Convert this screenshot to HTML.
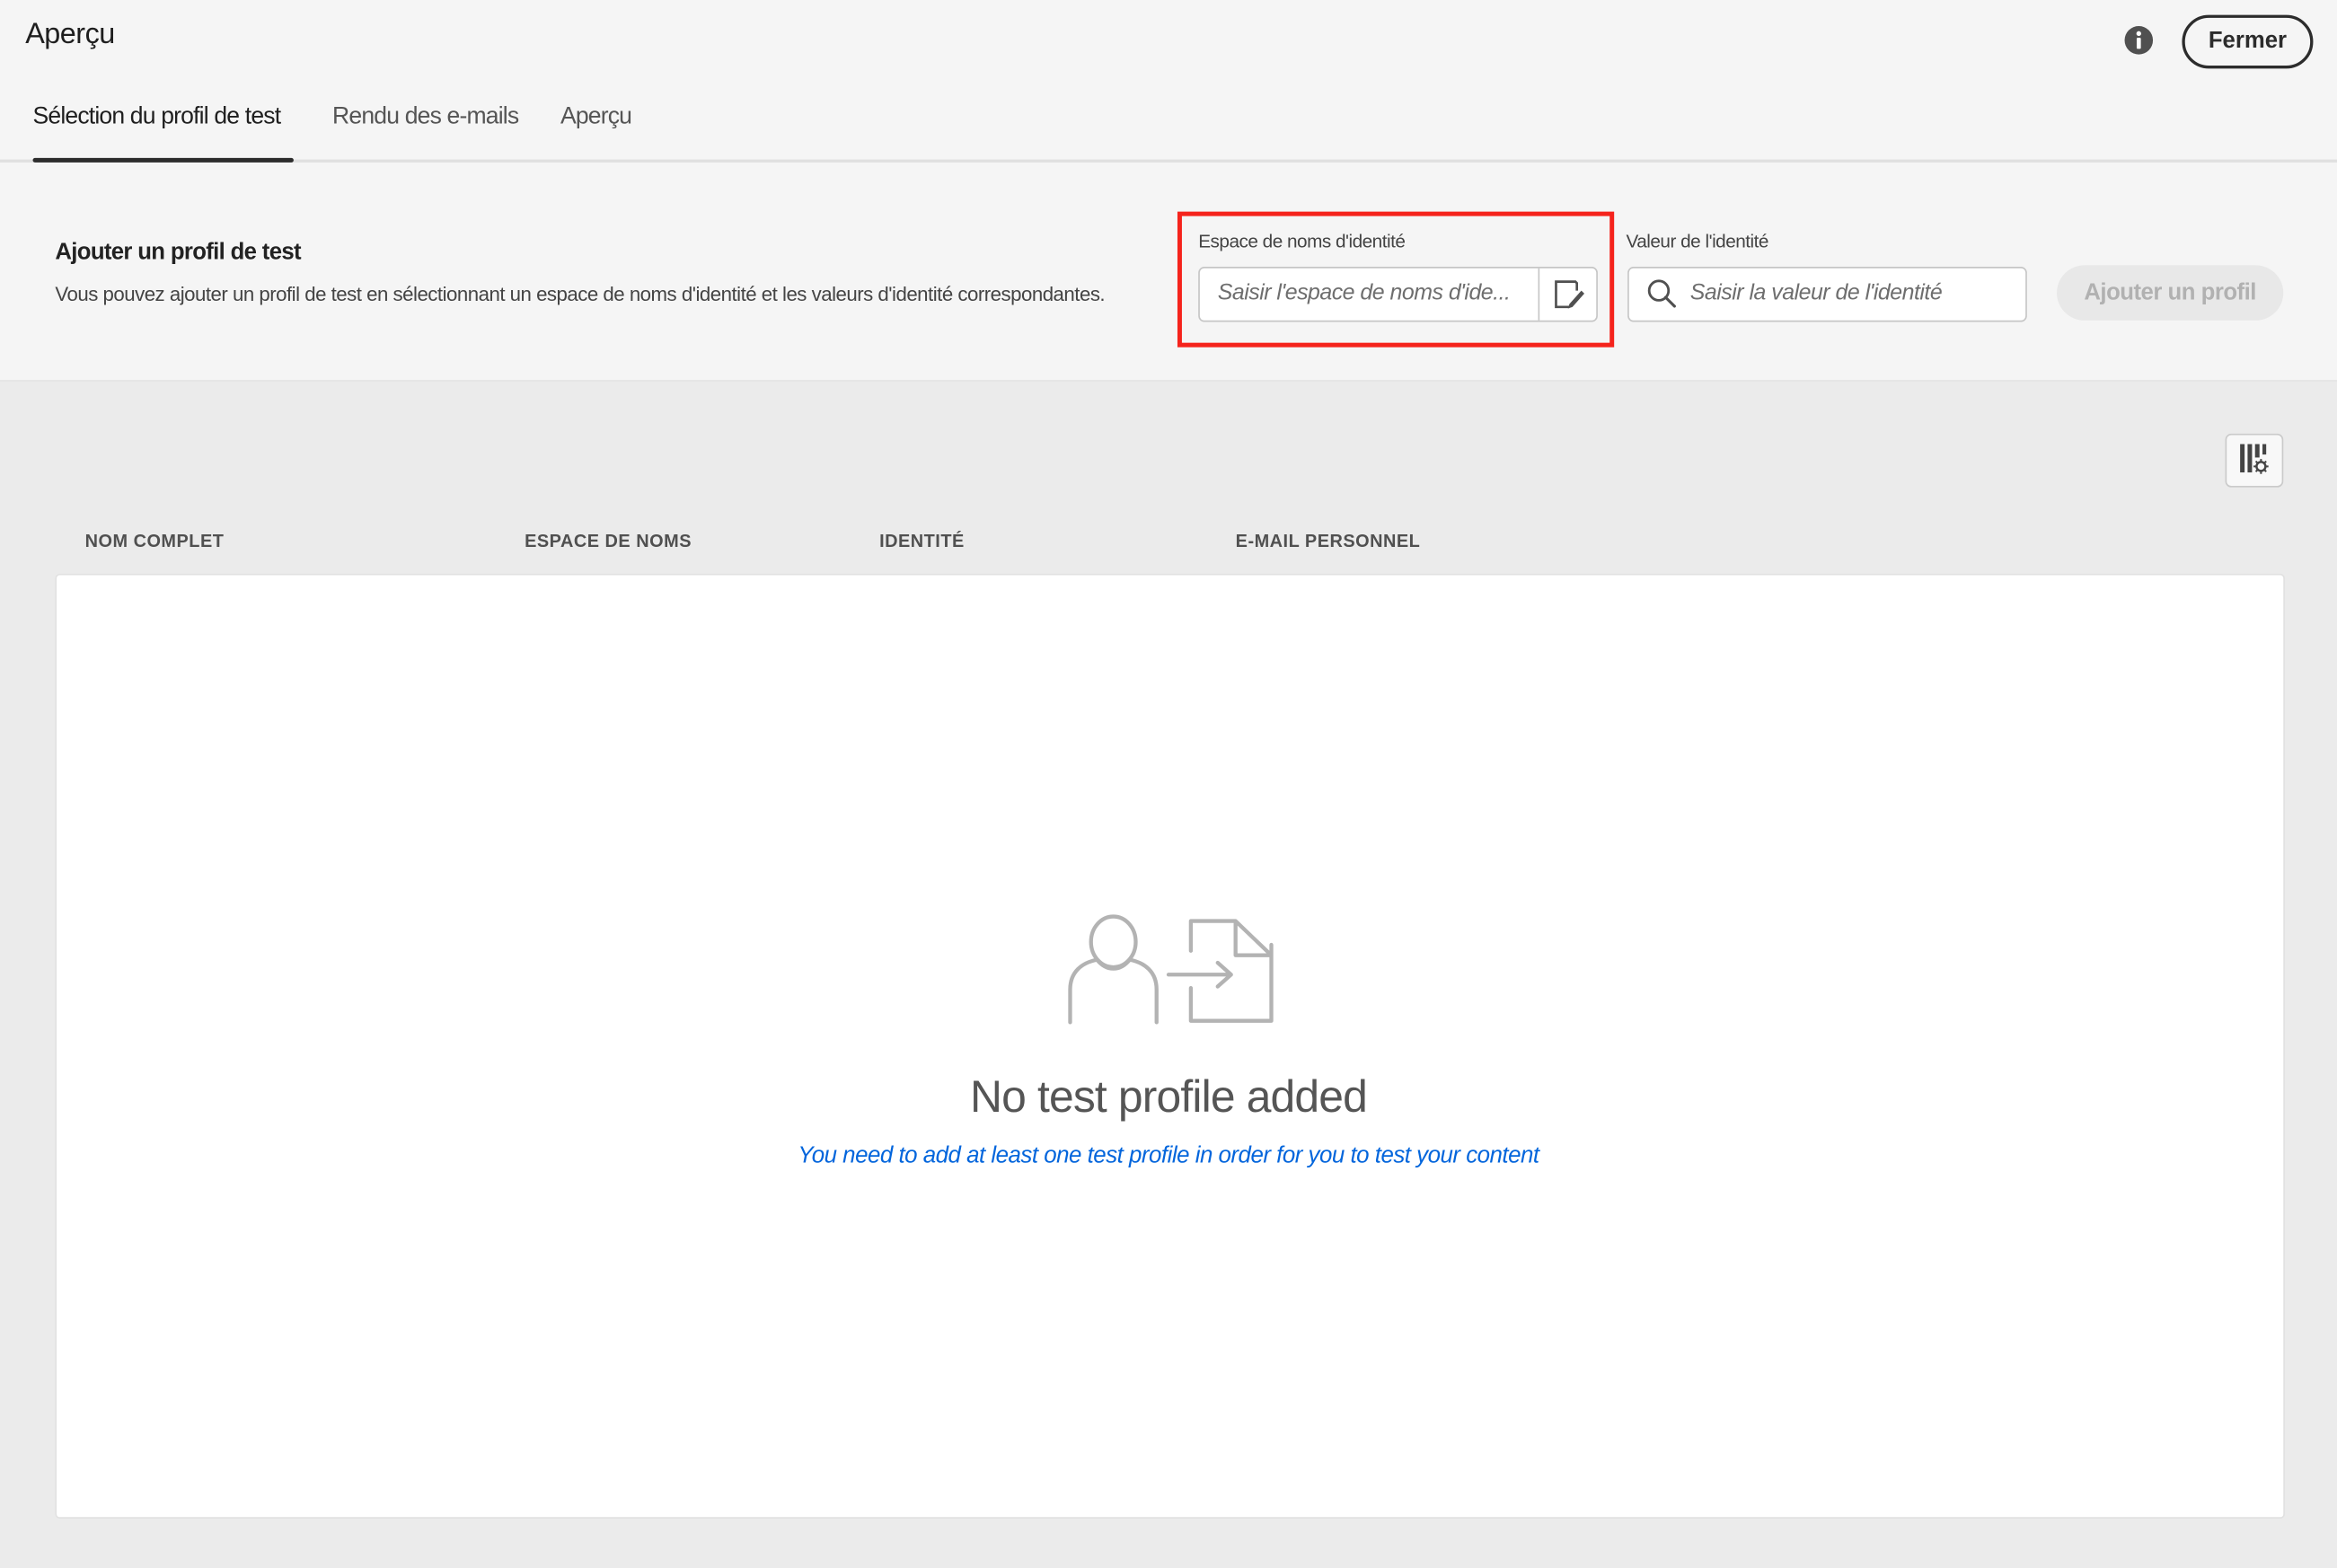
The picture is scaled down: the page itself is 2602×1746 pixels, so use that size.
<!DOCTYPE html>
<html><head><meta charset="utf-8"><style>
html,body{margin:0;padding:0;width:2602px;height:1746px;overflow:hidden;background:#ebebeb}
#s{position:absolute;left:0;top:0;width:1568px;height:1052px;transform:scale(1.65944);transform-origin:0 0;font-family:"Liberation Sans",sans-serif;background:#ebebeb;color:#2c2c2c}
.a{position:absolute;white-space:nowrap}
.top{position:absolute;left:0;top:0;width:1568px;height:255px;background:#f5f5f5;border-bottom:1px solid #e3e3e3}
.inp{position:absolute;background:#fff;border:1px solid #c6c6c6;border-radius:4px;box-sizing:border-box}
.ph{font-style:italic;color:#6e6e6e;font-size:15px;letter-spacing:-0.3px}
.th{font-size:12px;font-weight:bold;color:#505050;letter-spacing:0.3px;top:356px}
</style></head><body><div id="s">
<div class="top"></div>
<div class="a" style="left:17px;top:12px;font-size:19.5px;color:#1f1f1f;letter-spacing:-0.3px">Aperçu</div>
<div class="a" style="left:22px;top:70px;font-size:16px;color:#1f1f1f;letter-spacing:-0.5px">Sélection du profil de test</div>
<div class="a" style="left:223px;top:70px;font-size:16px;color:#555;letter-spacing:-0.5px">Rendu des e-mails</div>
<div class="a" style="left:376px;top:70px;font-size:16px;color:#555;letter-spacing:-0.5px">Aperçu</div>
<div class="a" style="left:0;top:107px;width:1568px;height:2px;background:#e0e0e0"></div>
<div class="a" style="left:22px;top:106px;width:175px;height:3px;background:#2c2c2c;border-radius:2px"></div>
<svg class="a" style="left:1425px;top:17px" width="20" height="20" viewBox="0 0 20 20"><circle cx="10" cy="10" r="9.5" fill="#505050"/><circle cx="10" cy="5.5" r="1.6" fill="#fff"/><rect x="8.6" y="8.3" width="2.8" height="7.5" rx="0.8" fill="#fff"/></svg>
<div class="a" style="left:1464px;top:10px;width:88px;height:36px;box-sizing:border-box;border:2px solid #2c2c2c;border-radius:18px;font-size:15.5px;font-weight:bold;text-align:center;line-height:32px;color:#2c2c2c">Fermer</div>

<div class="a" style="left:37px;top:161px;font-size:15.5px;font-weight:bold;color:#222;letter-spacing:-0.4px">Ajouter un profil de test</div>
<div class="a" style="left:37px;top:190px;font-size:13.4px;color:#444;letter-spacing:-0.3px">Vous pouvez ajouter un profil de test en sélectionnant un espace de noms d'identité et les valeurs d'identité correspondantes.</div>

<div class="a" style="left:790px;top:142px;width:293px;height:91px;box-sizing:border-box;border:3px solid #f5231c"></div>
<div class="a" style="left:804px;top:155px;font-size:12.5px;color:#444;letter-spacing:-0.3px">Espace de noms d'identité</div>
<div class="inp" style="left:804px;top:179px;width:268px;height:37px"></div>
<div class="a" style="left:1032px;top:180px;width:1px;height:35px;background:#c6c6c6"></div>
<div class="a ph" style="left:817px;top:188px">Saisir l'espace de noms d'ide...</div>
<svg class="a" style="left:1041px;top:186px" width="24" height="24" viewBox="0 0 24 24"><path d="M12 20H3V3h13l1 1v5" fill="none" stroke="#505050" stroke-width="1.6"/><path d="M20 9l2 2-8 9-3 1 1-3z" fill="#505050"/></svg>
<div class="a" style="left:1091px;top:155px;font-size:12.5px;color:#444;letter-spacing:-0.3px">Valeur de l'identité</div>
<div class="inp" style="left:1092px;top:179px;width:268px;height:37px"></div>
<svg class="a" style="left:1104px;top:186px" width="22" height="22" viewBox="0 0 22 22"><circle cx="9" cy="9" r="6.5" fill="none" stroke="#505050" stroke-width="1.7"/><path d="M13.5 13.5l6 6" stroke="#505050" stroke-width="1.9" stroke-linecap="round"/></svg>
<div class="a ph" style="left:1134px;top:188px">Saisir la valeur de l'identité</div>
<div class="a" style="left:1380px;top:178px;width:152px;height:37px;border-radius:19px;background:#e8e8e8;color:#b1b1b1;font-size:15.5px;font-weight:bold;text-align:center;line-height:37px;letter-spacing:-0.3px">Ajouter un profil</div>

<div class="a" style="left:1493px;top:291px;width:39px;height:36px;box-sizing:border-box;border:1px solid #cacaca;border-radius:4px;background:#f8f8f8"></div>
<svg class="a" style="left:1502px;top:297px" width="22" height="24" viewBox="0 0 22 24"><rect x="1" y="1" width="3" height="19" fill="#444"/><rect x="6" y="1" width="3" height="19" fill="#444"/><rect x="11" y="1" width="3" height="9" fill="#444"/><rect x="16" y="1" width="2.5" height="7" fill="#444"/><circle cx="15" cy="16" r="3" fill="none" stroke="#444" stroke-width="1.5"/><path d="M15 11v2M15 19v2M10 16h2M18 16h2M11.5 12.5l1.4 1.4M17.1 18.1l1.4 1.4M11.5 19.5l1.4-1.4M17.1 13.9l1.4-1.4" stroke="#444" stroke-width="1.2"/></svg>

<div class="a th" style="left:57px">NOM COMPLET</div>
<div class="a th" style="left:352px">ESPACE DE NOMS</div>
<div class="a th" style="left:590px">IDENTITÉ</div>
<div class="a th" style="left:829px">E-MAIL PERSONNEL</div>

<div class="a" style="left:37px;top:385px;width:1496px;height:634px;box-sizing:border-box;background:#fff;border:1px solid #e1e1e1;border-radius:3px"></div>
<svg class="a" style="left:710px;top:608px" width="150" height="84" viewBox="710 608 150 84" fill="none" stroke="#b3b3b3" stroke-width="2.6" stroke-linecap="round" stroke-linejoin="round">
<ellipse cx="747" cy="632" rx="15" ry="17"/>
<path d="M718 686v-22c0-12 8-18 18-20 4 5 8 6 11 6s7-1 11-6c10 2 18 8 18 20v22"/>
<path d="M799 663v22h54v-51M799 638v-20h30l24 23M829 618v23h24"/>
<path d="M784 654h42M817 646l9 8-9 8"/>
</svg>
<div class="a" style="left:0;width:1568px;text-align:center;top:720px;font-size:30px;color:#555;letter-spacing:-0.5px">No test profile added</div>
<div class="a" style="left:0;width:1568px;text-align:center;top:767px;font-size:15.6px;font-style:italic;color:#0265dc;letter-spacing:-0.3px">You need to add at least one test profile in order for you to test your content</div>
</div></body></html>
